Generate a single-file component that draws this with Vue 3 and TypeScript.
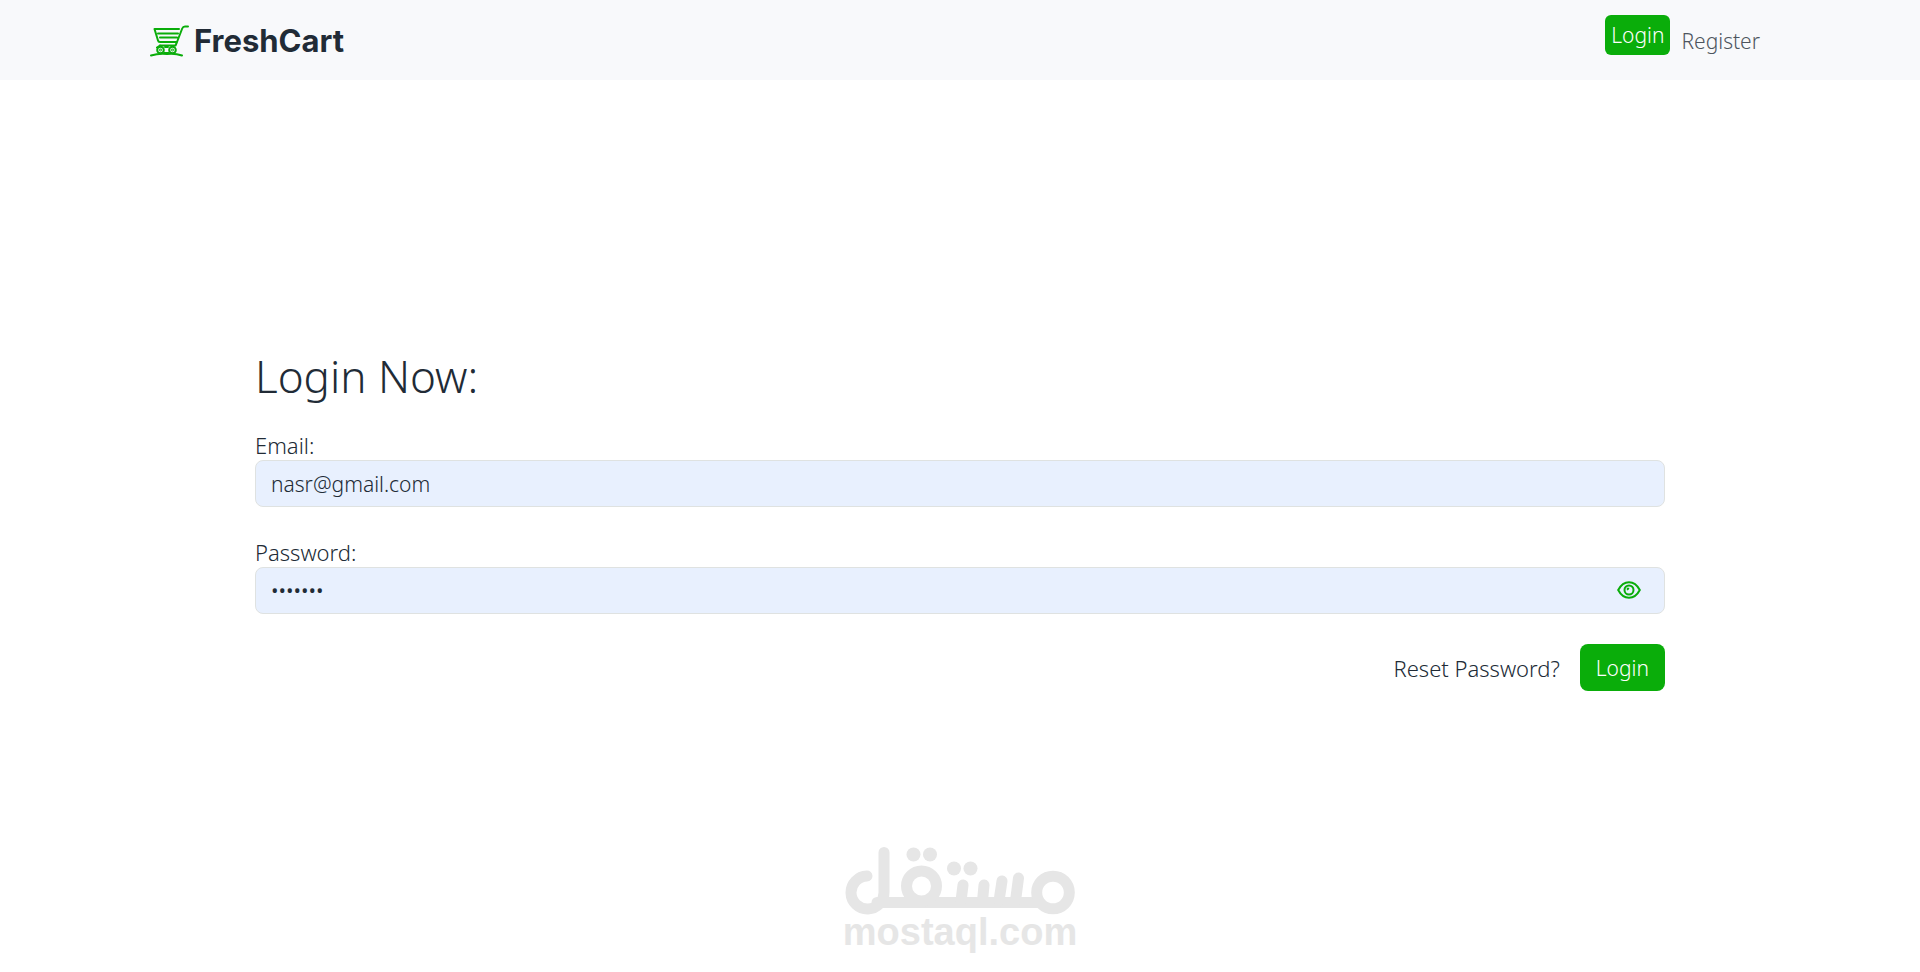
<script setup lang="ts">
import { ref } from 'vue'

const email = ref('nasr@gmail.com')
const password = ref('nasr123')
const revealed = ref(false)
</script>

<template>
  <div class="page">
    <header class="navbar">
      <a class="brand" href="#" aria-label="FreshCart">
        <svg class="cart" viewBox="0 0 40 32" aria-hidden="true">
          <path d="M29 4H4.500L8 15.500Q8.300 17 10 17H27M38 1.500H35Q33 1.500 32.200 3.500L27 17 25.500 20.500H10M8 8.500H28M10 12.500H27" />
          <circle cx="10.500" cy="25" r="3.300" />
          <circle cx="22.500" cy="25" r="3.300" />
          <circle cx="10.500" cy="25" r="0.400" />
          <circle cx="22.500" cy="25" r="0.400" />
          <path d="M15 22H18M14.500 28H18.500M7 22.500 10 20.500M1 30.500Q9 28 17 29 25 28 32 30.500" />
        </svg>
        <span>FreshCart</span>
      </a>
      <nav class="links">
        <a class="nav-login" href="#login">Login</a>
        <a class="nav-register" href="#register">Register</a>
      </nav>
    </header>

    <main class="content">
      <form class="login-form" @submit.prevent>
        <h1>Login Now:</h1>
        <div class="field">
          <label for="email">Email:</label>
          <input id="email" v-model="email" class="control" type="email" />
        </div>
        <div class="field">
          <label for="password">Password:</label>
          <div class="password-box">
            <input
              id="password"
              v-model="password"
              class="control"
              :class="{ masked: !revealed }"
              :type="revealed ? 'text' : 'password'"
            />
            <button class="reveal" type="button" aria-label="Show password" @click="revealed = !revealed">
              <svg viewBox="0 0 24 18" aria-hidden="true">
                <path d="M1.200 9Q5.300 1.200 12 1.200T22.800 9Q18.700 16.800 12 16.800T1.200 9Z" />
                <circle cx="12" cy="9" r="4.500" />
                <path d="M11.500 6.800A2.200 2.200 0 0 1 9.800 8.500" />
              </svg>
            </button>
          </div>
        </div>
        <div class="actions">
          <a href="#reset">Reset Password?</a>
          <button class="submit" type="submit">Login</button>
        </div>
      </form>
    </main>

    <footer class="watermark">
      <svg viewBox="0 0 230 68" role="img" aria-label="مستقل">
        <g class="strokes">
          <path d="M22 29A16.500 16.500 0 1 0 39 45V5.500M32 55.500H194" />
          <circle cx="76.500" cy="39" r="15" />
          <circle cx="208" cy="45.500" r="16.300" />
          <path d="M116 54 118 38M137.500 54 139 38M154 54 157 34M170.500 54 173.500 31" />
        </g>
        <circle cx="68.500" cy="7.500" r="7" />
        <circle cx="85" cy="7.500" r="7" />
        <circle cx="109" cy="21.500" r="7" />
        <circle cx="125.500" cy="21.500" r="7" />
      </svg>
      <span>mostaql.com</span>
    </footer>
  </div>
</template>

<style>
body {
  margin: 0;
  background: #fff;
}
</style>

<style scoped>
.page {
  min-height: 100vh;
  display: flex;
  flex-direction: column;
  box-sizing: border-box;
  color: #212b36;
  font: 300 21px/32px "Noto Sans", "Open Sans", sans-serif;
}
a {
  color: inherit;
  text-decoration: none;
}
.navbar {
  height: 80px;
  box-sizing: border-box;
  padding: 2px 160px 0 150px;
  display: flex;
  justify-content: space-between;
  background: #f8f9fb;
}
.brand {
  display: flex;
  align-items: center;
  gap: 4px;
  font: 700 31px/40px Inter, sans-serif;
}
.cart {
  width: 40px;
  height: 32px;
  fill: none;
  stroke: #0aad0a;
  stroke-width: 2;
  stroke-linecap: round;
  stroke-linejoin: round;
}
.links {
  display: flex;
  align-items: center;
  gap: 11px;
}
.nav-login {
  box-sizing: border-box;
  height: 40px;
  padding: 4px 6px;
  margin-bottom: 12px;
  border-radius: 6px;
  background: #0aad0a;
  color: #fff;
}
.nav-register {
  color: #4d555e;
}
.content {
  flex: 1;
  padding: 268px 255px 0;
}
h1 {
  margin: 0 0 26px;
  font-size: 44px;
  line-height: 56px;
  font-weight: 300;
}
.field {
  margin-bottom: 30px;
}
label {
  display: block;
  font-size: 22px;
  line-height: 30px;
}
.control {
  display: block;
  width: 100%;
  height: 47px;
  box-sizing: border-box;
  padding: 6px 15px;
  border: 1px solid #dfe2e1;
  border-radius: 8px;
  background: #e8f0fe;
  color: #212b36;
  font: inherit;
}
.masked {
  font: 500 20px/32px "Open Sans", sans-serif;
}
.password-box {
  position: relative;
}
.reveal {
  position: absolute;
  top: 0;
  right: 24px;
  height: 46px;
  padding: 0;
  border: 0;
  background: none;
  display: flex;
  align-items: center;
  cursor: pointer;
}
.reveal svg {
  width: 24px;
  height: 18px;
  fill: none;
  stroke: #0aad0a;
  stroke-width: 2;
}
.actions {
  display: flex;
  justify-content: flex-end;
  align-items: center;
  gap: 20px;
}
.actions a {
  font-size: 22px;
}
.submit {
  height: 47px;
  padding: 0 16px;
  border: 0;
  border-radius: 8px;
  background: #0aad0a;
  color: #fff;
  font: inherit;
  cursor: pointer;
}
.watermark {
  padding-bottom: 23px;
  display: flex;
  flex-direction: column;
  align-items: center;
  color: #e6e6e6;
  font: 700 38px/34px "Liberation Sans", Arial, sans-serif;
}
.watermark svg {
  width: 230px;
  height: 68px;
  overflow: visible;
  fill: #e6e6e6;
}
.strokes {
  fill: none;
  stroke: #e6e6e6;
  stroke-width: 11;
  stroke-linecap: round;
}
</style>
